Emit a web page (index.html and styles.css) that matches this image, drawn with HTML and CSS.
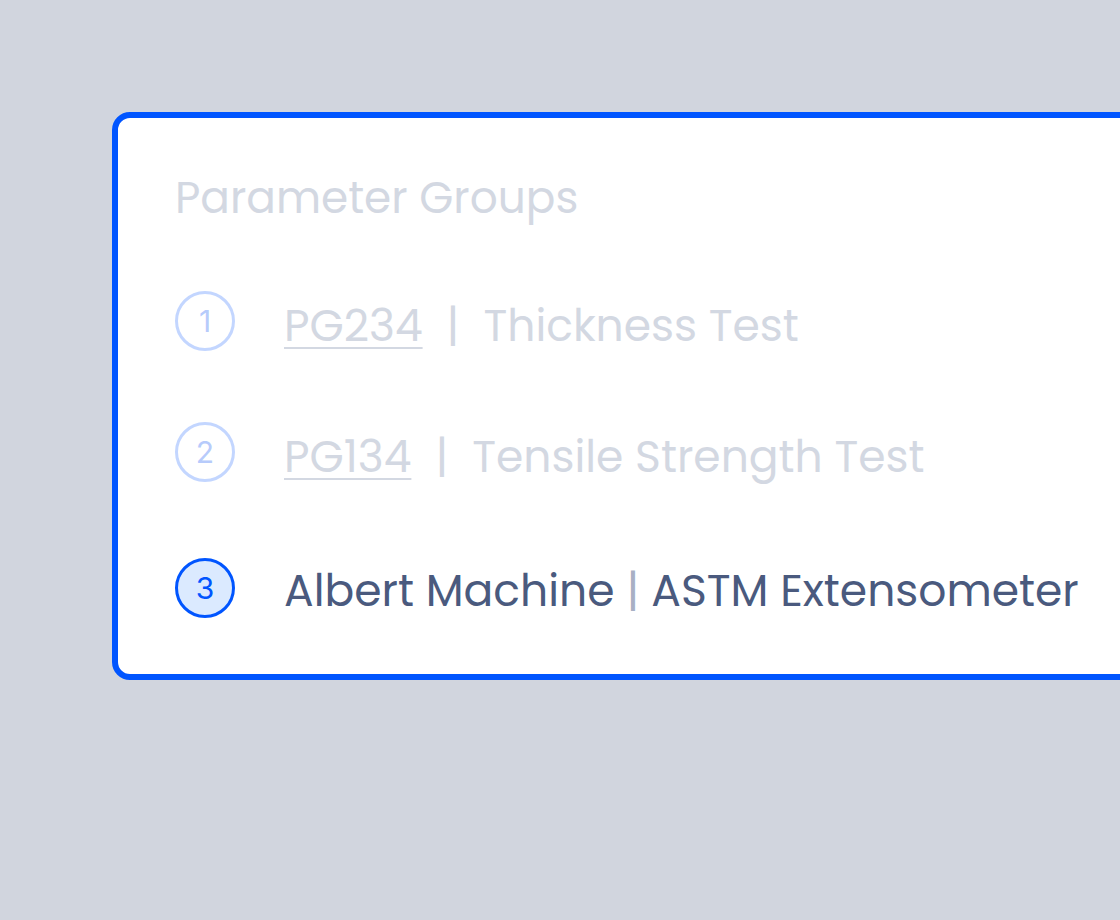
FILE: index.html
```html
<!DOCTYPE html>
<html>
<head>
<meta charset="utf-8">
<link rel="stylesheet" href="styles.css">
</head>
<body>
<div class="stage">
  <section class="card">
    <h2 class="title">Parameter Groups</h2>
    <ul class="steps">
      <li class="step done">
        <span class="num">1</span>
        <span class="label"><span class="code">PG234</span><span class="sep">|</span><span>Thickness Test</span></span>
      </li>
      <li class="step done">
        <span class="num">2</span>
        <span class="label"><span class="code">PG134</span><span class="sep">|</span><span>Tensile Strength Test</span></span>
      </li>
      <li class="step active">
        <span class="num">3</span>
        <span class="label"><span>Albert Machine</span><span class="sep">|</span><span>ASTM Extensometer</span></span>
      </li>
    </ul>
  </section>
</div>
</body>
</html>
```
FILE: styles.css
```css
html, body {
  margin: 0;
  padding: 0;
}
body {
  background: #d1d5de;
  width: 1120px;
  height: 920px;
  overflow: hidden;
  font-family: "Poppins", "Inter", "Noto Sans", sans-serif;
}
.stage {
  padding: 112px 0 0 112px;
}
.card {
  width: 1100px;
  height: 568px;
  box-sizing: border-box;
  background: #ffffff;
  border: 6px solid #0055ff;
  border-radius: 18px;
  padding: 52px 0 0 57px;
}
.title {
  margin: 0;
  font-size: 43.8px;
  font-weight: 400;
  line-height: 56px;
  color: #d3d8e2;
}
.steps {
  list-style: none;
  margin: 64px 0 0 0;
  padding: 0;
  display: flex;
  flex-direction: column;
  gap: 69px;
}
.step {
  display: flex;
  align-items: center;
  gap: 49px;
  height: 62px;
}
.step.active {
  margin-top: 5px;
}
.num {
  width: 60px;
  height: 60px;
  box-sizing: border-box;
  border-radius: 50%;
  border: 3px solid #c3d6ff;
  display: flex;
  align-items: center;
  justify-content: center;
  font-family: "Inter", "Noto Sans", sans-serif;
  font-size: 30px;
  color: #b7cbfb;
  flex: none;
}
.label {
  font-size: 44px;
  color: #d3d8e2;
  display: flex;
  align-items: baseline;
  white-space: nowrap;
  padding-top: 8px;
}
.code {
  text-decoration: underline;
  text-decoration-thickness: 2px;
  text-underline-offset: 6px;
}
.done .sep {
  margin: 0 24px;
}
.active .num {
  border-color: #0055ff;
  background: #dbeaff;
  color: #0055ff;
}
.active .label {
  color: #4a5a7e;
  padding-top: 4px;
}
.active .sep {
  color: #a8b0c4;
  margin: 0 12px;
}
```
